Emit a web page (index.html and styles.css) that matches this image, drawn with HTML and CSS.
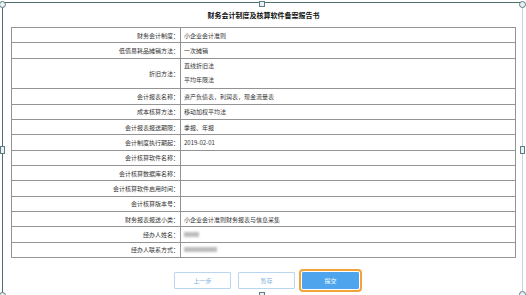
FILE: index.html
```html
<!DOCTYPE html>
<html lang="zh">
<head>
<meta charset="utf-8">
<title>财务会计制度及核算软件备案报告书</title>
<link rel="stylesheet" href="styles.css">
</head>
<body>
<div class="canvas">
  <div class="frame">
    <h1 class="title">财务会计制度及核算软件备案报告书</h1>
    <div class="form">
      <div class="label">财务会计制度：</div><div class="value">小企业会计准则</div>
      <div class="label">低值易耗品摊销方法：</div><div class="value">一次摊销</div>
      <div class="label tall">折旧方法：</div><div class="value tall multi"><span>直线折旧法</span><span>平均年限法</span></div>
      <div class="label">会计报表名称：</div><div class="value">资产负债表，利润表，现金流量表</div>
      <div class="label">成本核算方法：</div><div class="value">移动加权平均法</div>
      <div class="label">会计报表报送期限：</div><div class="value">季报、年报</div>
      <div class="label">会计制度执行期起：</div><div class="value">2019-02-01</div>
      <div class="label">会计核算软件名称：</div><div class="value"></div>
      <div class="label">会计核算数据库名称：</div><div class="value"></div>
      <div class="label">会计核算软件启用时间：</div><div class="value"></div>
      <div class="label">会计核算版本号：</div><div class="value"></div>
      <div class="label">财务报表报送小类：</div><div class="value">小企业会计准则财务报表与信息采集</div>
      <div class="label">经办人姓名：</div><div class="value"><span class="masked short"></span></div>
      <div class="label">经办人联系方式：</div><div class="value"><span class="masked long"></span></div>
    </div>
    <div class="actions">
      <button class="btn ghost" type="button">上一步</button>
      <button class="btn ghost" type="button">暂存</button>
      <button class="btn primary" type="button">提交</button>
    </div>
  </div>
  <span class="handle corner tl"></span>
  <span class="handle sq tc"></span>
  <span class="handle corner tr"></span>
  <span class="handle sq ml"></span>
  <span class="handle sq mr"></span>
  <span class="handle corner bl"></span>
  <span class="handle sq bc"></span>
  <span class="handle corner br"></span>
</div>
</body>
</html>
```

FILE: styles.css
```css
* { box-sizing: border-box; }
html, body {
  margin: 0;
  padding: 0;
  background: #ffffff;
}
body {
  width: 526px;
  height: 295px;
  overflow: hidden;
  font-family: "Noto Sans CJK SC", "Noto Sans", sans-serif;
}
.canvas {
  position: relative;
  width: 526px;
  height: 295px;
}
.frame {
  margin: 2px 3px 0 2px;
  height: 293px;
  border-left: 1px solid #4e6d70;
  border-top: 1px solid #4e6d70;
  border-right: 1px solid #c9d4d6;
  padding: 0 6px 0 8px;
  display: flex;
  flex-direction: column;
}
.title {
  margin: 6px 0 6px 0;
  height: 12px;
  line-height: 12px;
  font-size: 7px;
  font-weight: bold;
  color: #111;
  text-align: center;
}
.form {
  display: grid;
  grid-template-columns: 169px 1fr;
  grid-auto-rows: 15.33px;
  border-top: 1px solid #949494;
  border-left: 1px solid #949494;
  border-right: 1px solid #949494;
}
.label, .value {
  border-bottom: 1px solid #949494;
  display: flex;
  align-items: center;
  font-size: 6px;
  color: #333333;
  white-space: nowrap;
}
.label {
  border-right: 1px solid #949494;
  justify-content: flex-end;
  padding-right: 1px;
}
.value {
  padding-left: 3px;
}
.tall {
  grid-row: span 2;
}
.multi {
  flex-direction: column;
  align-items: flex-start;
  justify-content: center;
}
.multi span {
  line-height: 14px;
}
.masked {
  display: inline-block;
  height: 5px;
  background: #bdbdbd;
  filter: blur(1px);
}
.masked.short { width: 15px; }
.masked.long { width: 33px; }
.actions {
  display: flex;
  justify-content: center;
  gap: 7px;
  padding-left: 6px;
  margin-top: 14px;
}
.btn {
  width: 57px;
  height: 17px;
  padding: 0;
  font-family: inherit;
  font-size: 6px;
  border-radius: 1px;
}
.ghost {
  background: #ffffff;
  border: 1px solid #b9d5ef;
  color: #7fb0e0;
}
.primary {
  background: #4ea5ee;
  border: 1px solid #4ea5ee;
  color: #ffffff;
  outline: 2px solid #f2a33a;
  outline-offset: 1px;
}
.handle {
  position: absolute;
  width: 6px;
  height: 6px;
  background: #e8f1f3;
  border: 1px solid #5d7d82;
}
.handle.corner { border-radius: 50%; width: 7px; height: 7px; }
.tl { left: -1px; top: -1px; }
.tc { left: 259px; top: -1px; }
.tr { left: 519px; top: -1px; }
.ml { left: 0; top: 144px; width: 5px; height: 8px; }
.mr { left: 520px; top: 144px; width: 5px; height: 8px; }
.bl { left: -1px; top: 290px; }
.bc { left: 259px; top: 290px; }
.br { left: 519px; top: 289px; }
```
